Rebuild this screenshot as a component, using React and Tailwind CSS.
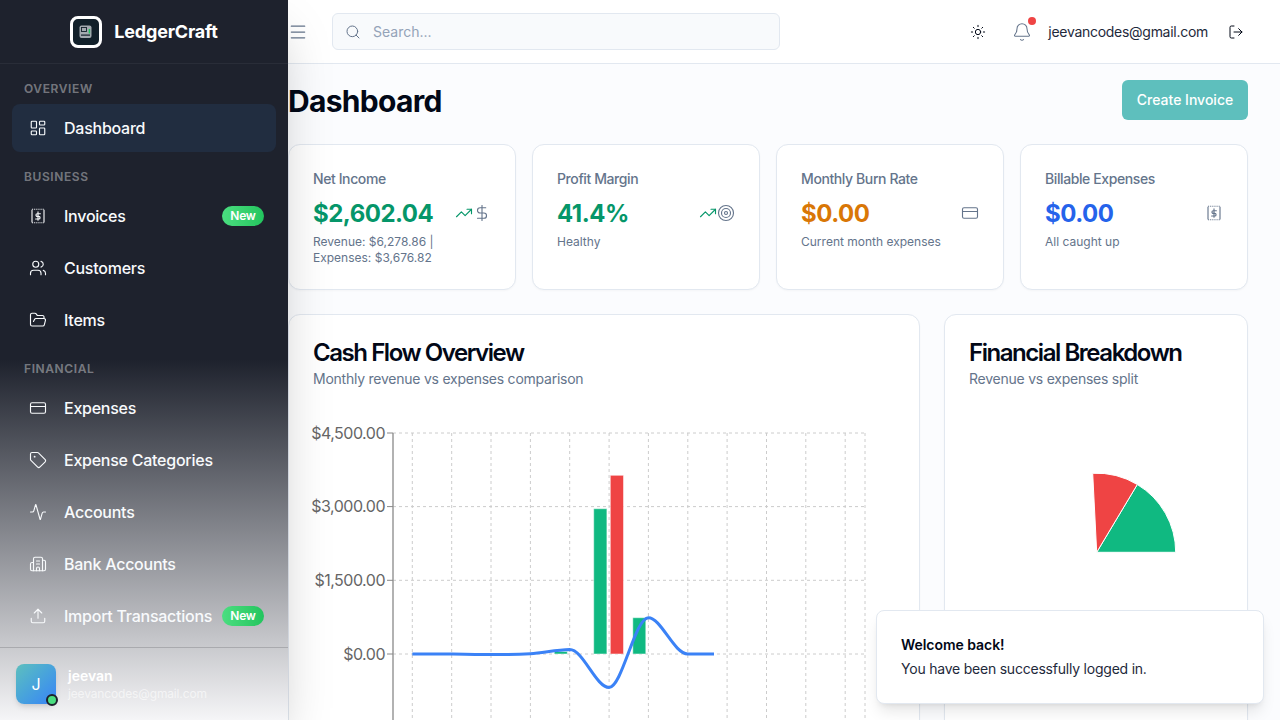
import React from "react";
import { LayoutDashboard, Users, FolderOpen, CreditCard, Tag, Activity, Building2, Upload, Menu, Search, Sun, Bell, LogOut, TrendingUp, DollarSign, Target } from "lucide-react";

const InvoiceIcon = ({ size = 18, className = "" }) => (
  <svg width={size} height={size} viewBox="0 0 24 24" fill="none" stroke="currentColor" strokeWidth="1.5" strokeLinejoin="round" className={className}>
    <path d="M4 3.5v17M20 3.5v17" />
    <path d="M4 3h16M4 21h16" strokeDasharray="1.3 1.2" strokeWidth="1.5" />
    <path d="M12 6.5v11M15.2 9H11a1.75 1.75 0 0 0 0 3.5h2a1.75 1.75 0 0 1 0 3.5H8.8" strokeWidth="1.5" strokeLinecap="round" />
  </svg>
);

const Badge = () => (
  <span className="ml-auto flex h-5 w-[42px] shrink-0 items-center justify-center rounded-full bg-gradient-to-r from-[#4ade80] to-[#22c55e] text-xs font-semibold text-white">New</span>
);

const NavItem = ({ icon: Icon, label, active, badge }) => (
  <div className={`flex h-12 items-center rounded-lg pl-4 pr-3 text-base font-medium tracking-[-0.25px] text-[#f8fafc] ${active ? "bg-[#212d40]" : ""}`}>
    <span className="flex w-5 shrink-0 justify-center"><Icon size={18} strokeWidth={1.5} /></span>
    <span className="ml-4 whitespace-nowrap">{label}</span>
    {badge && <Badge />}
  </div>
);

const Section = ({ title, children }) => (
  <div className="mb-4">
    <div className="mb-2 h-4 px-3 text-xs font-semibold leading-[18px] tracking-wider text-white/40">{title}</div>
    <div className="flex flex-col gap-1">{children}</div>
  </div>
);

const Sidebar = () => (
  <aside className="relative z-10 flex h-full w-72 shrink-0 flex-col bg-[linear-gradient(to_bottom,#1e222d_50%,#f5f5f7_100%)] shadow-2xl">
    <div className="flex h-16 shrink-0 items-center justify-center gap-3 border-b border-white/5">
      <div className="flex h-8 w-8 items-center justify-center rounded-lg border-[3px] border-white bg-[#12202a]">
        <svg width="14" height="14" viewBox="0 0 14 14">
          <rect x="0.5" y="0.5" width="12" height="12.5" rx="2" fill="#a3aab0" />
          <rect x="2.5" y="2.5" width="5" height="4" fill="none" stroke="#12202a" strokeWidth="0.9" />
          <rect x="2" y="9.5" width="9" height="1.2" fill="#12202a" />
          <rect x="9.7" y="4" width="1.4" height="4.5" fill="#22c55e" />
        </svg>
      </div>
      <span className="text-lg font-bold tracking-[-0.2px] text-white">LedgerCraft</span>
    </div>
    <nav className="flex-1 overflow-hidden px-3 pt-4">
      <Section title="OVERVIEW">
        <NavItem icon={LayoutDashboard} label="Dashboard" active />
      </Section>
      <Section title="BUSINESS">
        <NavItem icon={InvoiceIcon} label="Invoices" badge />
        <NavItem icon={Users} label="Customers" />
        <NavItem icon={FolderOpen} label="Items" />
      </Section>
      <Section title="FINANCIAL">
        <NavItem icon={CreditCard} label="Expenses" />
        <NavItem icon={Tag} label="Expense Categories" />
        <NavItem icon={Activity} label="Accounts" />
        <NavItem icon={Building2} label="Bank Accounts" />
        <NavItem icon={Upload} label="Import Transactions" badge />
      </Section>
    </nav>
    <div className="flex shrink-0 items-center gap-3 border-t border-[#a9aaae] p-4">
      <div className="relative flex h-10 w-10 shrink-0 items-center justify-center rounded-lg bg-gradient-to-br from-[#5ebfbd] to-[#3b82f6] text-base font-normal text-white shadow-md">
        J
        <span className="absolute -bottom-0.5 -right-0.5 h-3 w-3 rounded-full border-2 border-[#1e222d] bg-[#4ade80]" />
      </div>
      <div className="min-w-0">
        <div className="text-sm font-semibold leading-5 text-white">jeevan</div>
        <div className="text-xs leading-4 tracking-[-0.15px] text-white/60">jeevancodes@gmail.com</div>
      </div>
    </div>
  </aside>
);

const Header = () => (
  <header className="flex h-16 shrink-0 items-center border-b border-[#e2e8f0] bg-white pr-8">
    <Menu size={20} strokeWidth={1.5} className="shrink-0 text-[#64748b]" />
    <div className="ml-6 flex h-[37px] w-[448px] items-center rounded-md border border-[#e2e8f0] bg-[#f8fafc] pl-3">
      <Search size={16} strokeWidth={1.5} className="text-[#64748b]" />
      <span className="ml-3 text-sm text-[#94a3b8]">Search...</span>
    </div>
    <div className="ml-auto flex items-center">
      <Sun size={16} strokeWidth={1.5} className="text-[#020817]" />
      <div className="relative ml-[26px]">
        <Bell size={20} strokeWidth={1.25} className="text-[#64748b]" />
        <span className="absolute -right-1 -top-[5px] h-2 w-2 rounded-full bg-[#ef4444]" />
      </div>
      <span className="ml-4 text-sm tracking-[-0.28px] text-[#1e293b]">jeevancodes@gmail.com</span>
      <LogOut size={16} strokeWidth={1.5} className="ml-5 mr-1 text-[#020817]" />
    </div>
  </header>
);

const Stat = ({ label, value, color, sub, icons }) => (
  <div className="h-[146px] rounded-xl border border-[#e2e8f0] bg-white p-6 shadow-[0_1px_2px_rgba(0,0,0,0.03)]">
    <div className="text-sm font-medium tracking-[-0.4px] text-[#64748b]">{label}</div>
    <div className="mt-2 flex h-8 items-start justify-between">
      <span className={`text-2xl font-bold leading-[34px] tracking-[-0.5px] ${color}`}>{value}</span>
      <span className="flex h-8 items-center">{icons}</span>
    </div>
    <div className="mt-[5px] text-xs leading-4 text-[#64748b]">{sub}</div>
  </div>
);

const Trend = () => <TrendingUp size={18} strokeWidth={1.5} className="text-[#059669]" />;

const CashFlowChart = () => {
  const hs = [
    [433, "$4,500.00"],
    [506.6, "$3,000.00"],
    [580.3, "$1,500.00"],
    [654, "$0.00"],
  ];
  const vs = [412.3, 451.7, 491, 530.4, 569.7, 609.1, 648.4, 687.8, 727.1, 766.5, 805.8, 845.2, 865];
  const o = (x) => x - 313;
  const p = (y) => y - 413;
  return (
    <svg width="582" height="320" viewBox="0 0 582 320" className="block overflow-visible" fontFamily="Inter, sans-serif">
      {hs.map(([y]) => (
        <line key={y} x1={o(393)} x2={o(865)} y1={p(y)} y2={p(y)} stroke="#ccc" strokeDasharray="3 3" />
      ))}
      {vs.map((x) => (
        <line key={x} x1={o(x)} x2={o(x)} y1={p(433)} y2={320} stroke="#ccc" strokeDasharray="3 3" />
      ))}
      <line x1={o(393)} x2={o(393)} y1={p(433)} y2={320} stroke="#999" strokeWidth="1.5" />
      {hs.map(([y, t]) => (
        <g key={t}>
          <line x1={o(387)} x2={o(393)} y1={p(y)} y2={p(y)} stroke="#888" />
          <text x={o(385)} y={p(y) + 5.5} textAnchor="end" fontSize="16" letterSpacing="-0.5" fill="#666">{t}</text>
        </g>
      ))}
      <g stroke="#fff" strokeOpacity="0.5">
        <rect x={o(554.3)} y={p(651.5)} width="13" height="2.5" fill="#10b981" />
        <rect x={o(593.7)} y={p(508.7)} width="13.2" height="145.3" fill="#10b981" />
        <rect x={o(610.3)} y={p(475.3)} width="13.2" height="178.7" fill="#ef4444" />
        <rect x={o(632.8)} y={p(617.7)} width="13" height="36.3" fill="#10b981" />
      </g>
      <path
        transform="translate(-313 -413)"
        d="M412.3 654 C425 654 438 654 451.7 654 C465 654.3 478 654.6 491 654.6 C504 654.6 517 654.4 530.4 653.8 C543 653 556 650 569.7 649.6 C583 649.6 596 687.5 609.1 687.5 C622 687.5 635 617.7 648.4 617.7 C661 617.7 674 654 687.8 654 L714 654"
        fill="none"
        stroke="#3b82f6"
        strokeWidth="3"
      />
    </svg>
  );
};

const Pie = () => (
  <svg width="254" height="200" viewBox="0 0 254 200" className="block">
    <g transform="translate(127.7 139.3)" stroke="#fff" strokeWidth="1">
      <path d="M0 0 L79 0 A79 79 0 0 0 40.6 -67.8 Z" fill="#10b981" />
      <path d="M0 0 L40.6 -67.8 A79 79 0 0 0 -4 -79 Z" fill="#ef4444" />
    </g>
  </svg>
);

const ChartCard = ({ title, sub, className, children }) => (
  <div className={`h-[600px] rounded-xl border border-[#e2e8f0] bg-white shadow-[0_1px_2px_rgba(0,0,0,0.03)] ${className}`}>
    <div className="p-6">
      <h3 className="h-6 text-2xl font-semibold leading-[28px] tracking-[-1.45px] text-[#020817]">{title}</h3>
      <p className="mt-1.5 text-sm tracking-[-0.24px] text-[#64748b]">{sub}</p>
    </div>
    <div className="px-6">{children}</div>
  </div>
);

export default function App() {
  return (
    <div className="relative flex h-screen w-full overflow-hidden bg-[#fbfcfe] font-['Inter',sans-serif]">
      <Sidebar />
      <main className="flex h-full min-w-0 flex-1 flex-col">
        <Header />
        <div className="flex-1 overflow-hidden pr-8 pt-4">
          <div className="mb-6 flex items-center justify-between">
            <h1 className="pt-0.5 text-3xl font-bold tracking-[-0.7px] text-[#020817]">Dashboard</h1>
            <div className="flex h-10 w-[126px] items-center justify-center rounded-md bg-[#5ebfbd] text-sm font-medium text-white">Create Invoice</div>
          </div>
          <div className="mb-6 grid grid-cols-4 gap-4">
            <Stat label="Net Income" value="$2,602.04" color="text-[#059669]" sub={<>Revenue: $6,278.86 |<br />Expenses: $3,676.82</>} icons={<><Trend /><DollarSign size={18} strokeWidth={1.5} className="text-[#64748b]" /></>} />
            <Stat label="Profit Margin" value="41.4%" color="text-[#059669]" sub="Healthy" icons={<><Trend /><Target size={18} strokeWidth={1.5} className="text-[#64748b]" /></>} />
            <Stat label="Monthly Burn Rate" value="$0.00" color="text-[#d97706]" sub="Current month expenses" icons={<CreditCard size={18} strokeWidth={1.5} className="text-[#64748b]" />} />
            <Stat label="Billable Expenses" value="$0.00" color="text-[#2563eb]" sub="All caught up" icons={<InvoiceIcon size={18} className="text-[#64748b]" />} />
          </div>
          <div className="grid grid-cols-3 gap-6">
            <ChartCard title="Cash Flow Overview" sub="Monthly revenue vs expenses comparison" className="col-span-2">
              <CashFlowChart />
            </ChartCard>
            <ChartCard title="Financial Breakdown" sub="Revenue vs expenses split">
              <Pie />
            </ChartCard>
          </div>
        </div>
      </main>
      <div className="absolute bottom-4 right-4 z-20 w-[388px] rounded-lg border border-[#e2e8f0] bg-white p-6 shadow-lg">
        <div className="text-sm font-semibold tracking-[-0.05px] text-[#020817]">Welcome back!</div>
        <div className="mt-1 text-sm tracking-[-0.22px] text-[#1e293b]">You have been successfully logged in.</div>
      </div>
    </div>
  );
}
